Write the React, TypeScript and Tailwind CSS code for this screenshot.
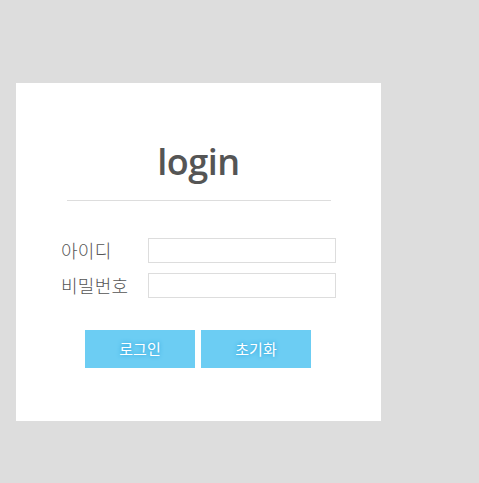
import React from 'react';

export default function App() {
  return (
    <div className="min-h-screen w-full bg-[#dddddd] pt-[83px] pl-[16px]">
      <div className="w-[365px] h-[338px] bg-white flex flex-col items-center pt-[56px]">
        {/* Title */}
        <h1 className="text-[36px] leading-[46px] font-semibold text-[#555555] font-['Open_Sans','Noto_Sans',sans-serif] tracking-[-0.5px]">
          login
        </h1>
        <div className="w-[264px] h-px bg-[#dddddd] mt-[15px]"></div>

        {/* Form rows */}
        <div className="mt-[37px] flex flex-col gap-[10px] font-['Noto_Sans_CJK_KR',sans-serif] text-[#555555]">
          <div className="flex items-center">
            <label className="w-[87px] text-[18px] leading-[25px] font-light tracking-[0.3px]">아이디</label>
            <input className="w-[188px] h-[25px] border border-[#dddddd] outline-none" />
          </div>
          <div className="flex items-center">
            <label className="w-[87px] text-[18px] leading-[25px] font-light tracking-[0.3px]">비밀번호</label>
            <input type="password" className="w-[188px] h-[25px] border border-[#dddddd] outline-none" />
          </div>
        </div>

        {/* Buttons */}
        <div className="mt-[32px] mr-px flex gap-[6px] font-['Noto_Sans_CJK_KR',sans-serif]">
          <button className="w-[110px] h-[38px] bg-[#6ccdf3] text-white text-[15px] [text-shadow:0_0_4px_#1b9ad6]">
            로그인
          </button>
          <button className="w-[110px] h-[38px] bg-[#6ccdf3] text-white text-[15px] [text-shadow:0_0_4px_#1b9ad6]">
            초기화
          </button>
        </div>
      </div>
    </div>
  );
}
